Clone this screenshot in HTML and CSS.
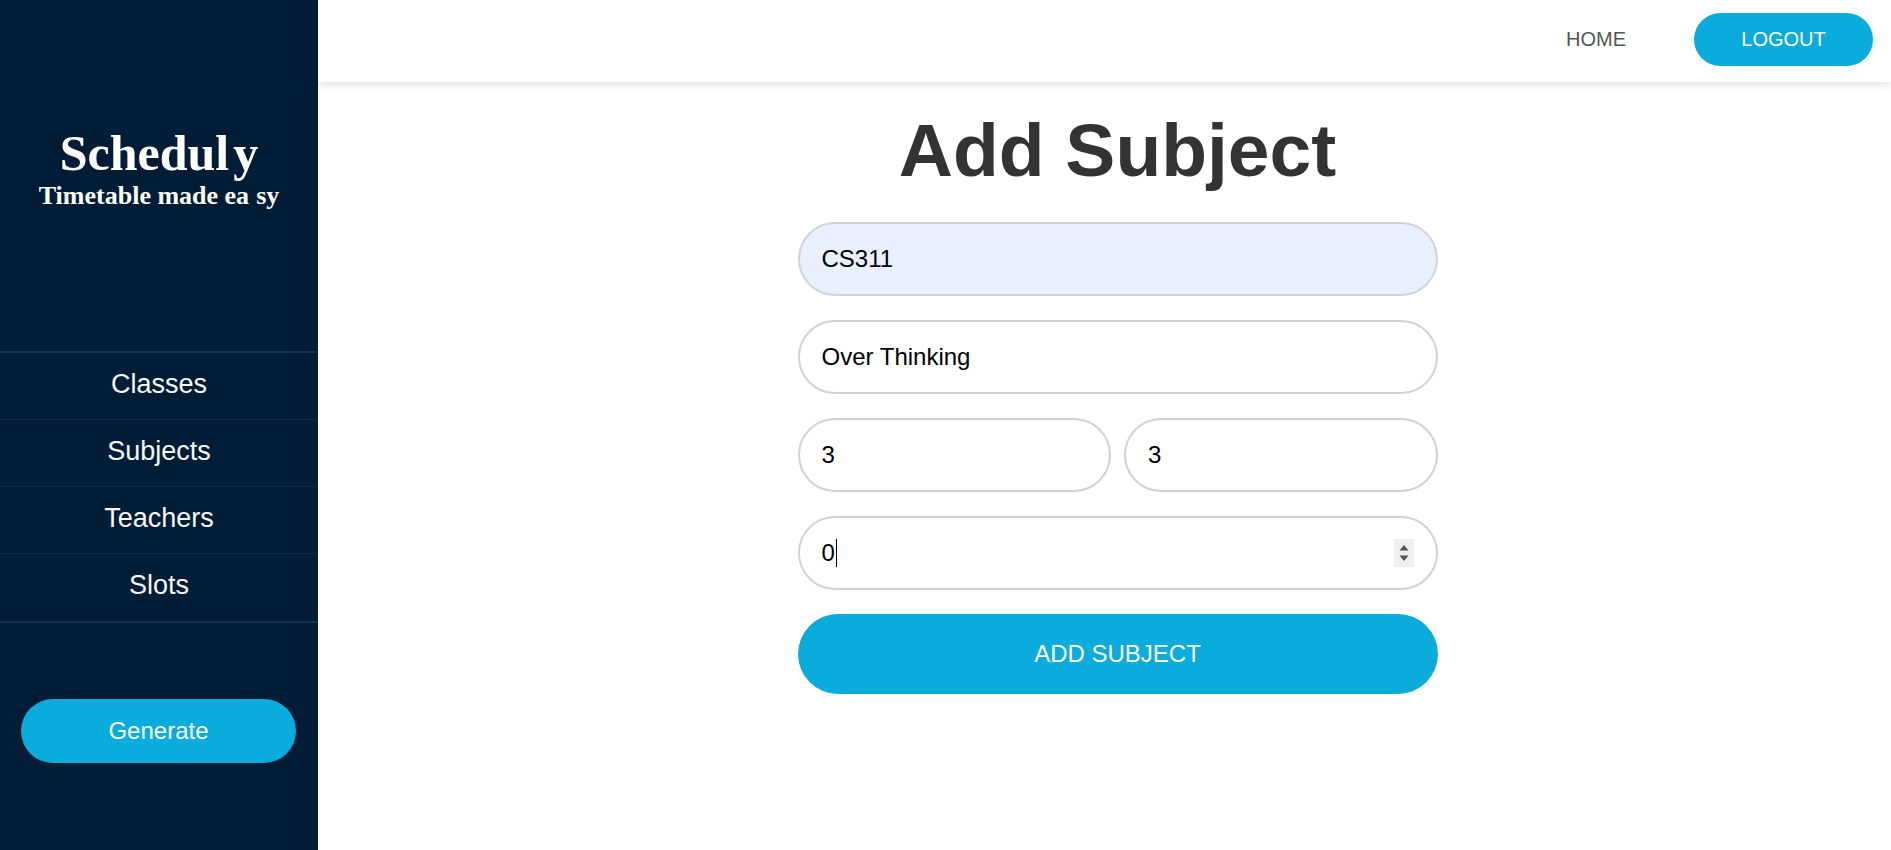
FILE: index.html
```html
<!DOCTYPE html>
<html lang="en">
<head>
<meta charset="utf-8">
<title>Scheduly - Add Subject</title>
<link rel="stylesheet" href="styles.css">
</head>
<body>
<div class="app">
  <aside class="sidebar">
    <div class="brand">
      <div class="brand-name">Schedul<span class="kern"></span>y</div>
      <div class="brand-tag">Timetable made ea<span class="kern2"></span>sy</div>
    </div>
    <nav class="side-nav">
      <a class="side-link" href="#">Classes</a>
      <a class="side-link" href="#">Subjects</a>
      <a class="side-link" href="#">Teachers</a>
      <a class="side-link" href="#">Slots</a>
    </nav>
    <button class="generate" type="button">Generate</button>
  </aside>
  <div class="main">
    <header class="topbar">
      <a class="home-link" href="#">HOME</a>
      <button class="logout" type="button">LOGOUT</button>
    </header>
    <section class="content">
      <h1 class="title">Add Subject</h1>
      <form class="form">
        <input class="field autofill" type="text" value="CS311">
        <input class="field" type="text" value="Over Thinking">
        <div class="row">
          <input class="field" type="text" value="3">
          <input class="field" type="text" value="3">
        </div>
        <div class="field number-field">
          <span class="number-value">0</span><span class="caret"></span>
          <span class="spinner">
            <svg width="14" height="24" viewBox="0 0 14 24"><path d="M2.5 9.5 L7 4 L11.5 9.5 Z M2.5 14.5 L11.5 14.5 L7 20 Z" fill="#555"/></svg>
          </span>
        </div>
        <button class="submit" type="button">ADD SUBJECT</button>
      </form>
    </section>
  </div>
</div>
</body>
</html>
```

FILE: styles.css
```css
* {
  box-sizing: border-box;
}

html, body {
  margin: 0;
  padding: 0;
  height: 100%;
}

body {
  font-family: "Liberation Sans", Arial, sans-serif;
  background: #ffffff;
}

.app {
  display: flex;
  height: 850px;
}

.sidebar {
  width: 318px;
  flex: 0 0 318px;
  background: #021d35;
  display: flex;
  flex-direction: column;
  color: #ffffff;
}

.brand {
  height: 351px;
  padding-top: 133px;
  text-align: center;
  font-family: "Liberation Serif", "Times New Roman", serif;
  font-weight: bold;
}

.brand-name {
  font-size: 50px;
  line-height: 40px;
}

.kern {
  display: inline-block;
  width: 4px;
}

.brand-tag {
  font-size: 26px;
  line-height: 22px;
  margin-top: 12px;
}

.kern2 {
  display: inline-block;
  width: 7px;
}

.side-nav {
  display: flex;
  flex-direction: column;
  border-top: 2px solid #0e3354;
  border-bottom: 2px solid #0e3354;
}

.side-link {
  height: 67px;
  display: flex;
  align-items: center;
  justify-content: center;
  padding-bottom: 4px;
  color: #f4f6f8;
  text-decoration: none;
  font-size: 27px;
  border-bottom: 1px solid #0a2a46;
}

.side-link:last-child {
  border-bottom: none;
}

.generate {
  margin: 76px 22px 0 21px;
  height: 64px;
  border: none;
  border-radius: 32px;
  background: #0aacdc;
  color: #ffffff;
  font-family: "Liberation Sans", Arial, sans-serif;
  font-size: 24px;
}

.main {
  flex: 1;
  display: flex;
  flex-direction: column;
}

.topbar {
  height: 82px;
  display: flex;
  align-items: center;
  justify-content: flex-end;
  padding: 0 18px 3px 0;
  background: #ffffff;
  box-shadow: 0 3px 8px rgba(0, 0, 0, 0.12);
  position: relative;
  z-index: 1;
}

.home-link {
  color: #555555;
  text-decoration: none;
  font-size: 20px;
  margin-right: 68px;
}

.logout {
  width: 179px;
  height: 53px;
  border: none;
  border-radius: 27px;
  background: #0aacdc;
  color: #ffffff;
  font-family: "Liberation Sans", Arial, sans-serif;
  font-size: 20px;
}

.content {
  display: flex;
  flex-direction: column;
  align-items: center;
  padding-left: 26px;
}

.title {
  margin: 25px 0 29px;
  font-size: 75px;
  font-weight: bold;
  color: #333333;
  line-height: normal;
}

.form {
  width: 640px;
  display: flex;
  flex-direction: column;
  gap: 24px;
}

.field {
  width: 100%;
  height: 74px;
  border: 2px solid #d2d2d2;
  border-radius: 37px;
  padding: 0 22px;
  font-family: "Liberation Sans", Arial, sans-serif;
  font-size: 24px;
  color: #000000;
  background: #ffffff;
  outline: none;
}

.autofill {
  background: #e8f0fe;
}

.row {
  display: flex;
  gap: 13px;
}

.row .field {
  flex: 1;
  min-width: 0;
}

.number-field {
  display: flex;
  align-items: center;
  padding-right: 22px;
}

.number-value {
  font-size: 24px;
  color: #000000;
}

.caret {
  width: 1px;
  height: 28px;
  background: #000000;
  margin-left: 1px;
  margin-right: auto;
}

.spinner {
  width: 20px;
  height: 28px;
  background: #efefef;
  display: flex;
  align-items: center;
  justify-content: center;
}

.submit {
  height: 80px;
  border: none;
  border-radius: 40px;
  background: #0aacdc;
  color: #ffffff;
  font-family: "Liberation Sans", Arial, sans-serif;
  font-size: 24px;
}
```
